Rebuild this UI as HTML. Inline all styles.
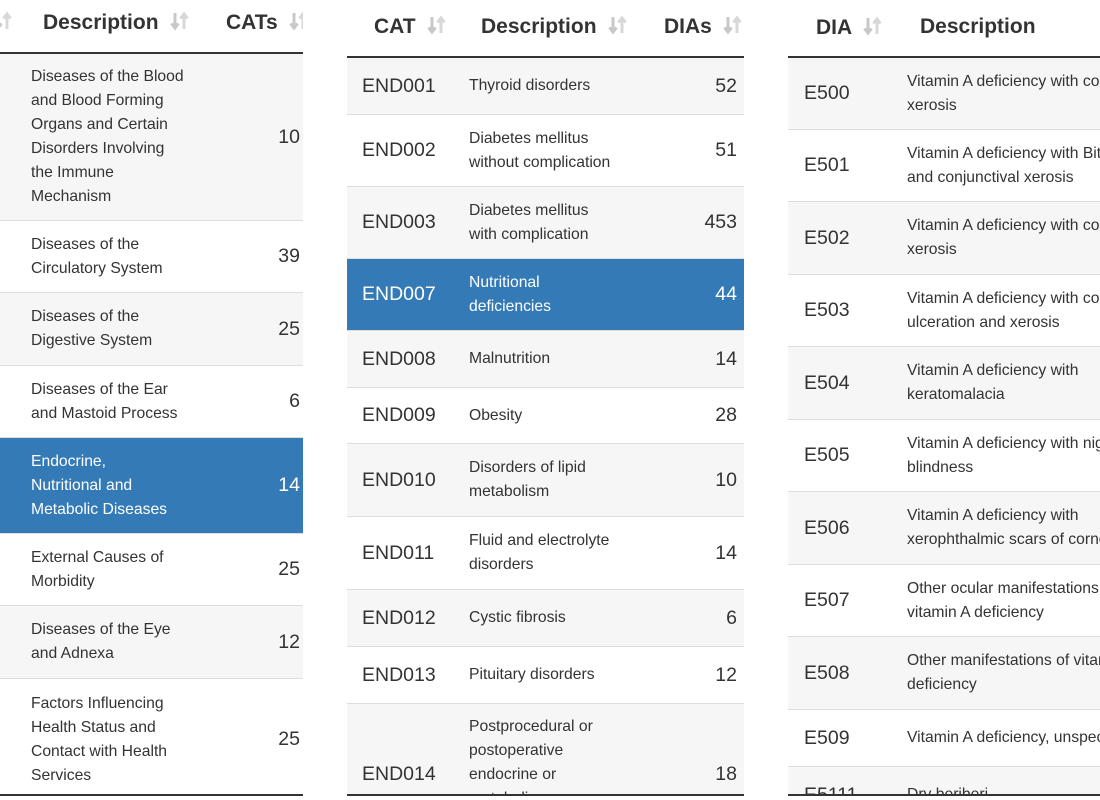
<!DOCTYPE html>
<html><head><meta charset="utf-8"><style>
*{margin:0;padding:0;box-sizing:border-box}
html,body{width:1100px;height:800px;overflow:hidden}
body{background:#fff;font-family:"Liberation Sans",sans-serif;color:#333;position:relative}
.p{position:absolute;top:0;height:796px;overflow:hidden;border-bottom:2px solid #333}
.hd{position:absolute;left:0;right:0;top:0;border-bottom:2px solid #333}
.h{position:absolute;font-weight:bold;font-size:21px;color:#333;white-space:nowrap}
.s{display:inline-block;margin-left:10px;width:22px;height:22px;vertical-align:-3px}
.r{position:absolute;left:0;right:0;border-bottom:1px solid #ddd;display:flex;align-items:center}
.g{background:#f6f6f6}
.b{background:#337ab7;color:#fff}
.d{position:absolute;font-size:15.7px;line-height:24px;white-space:nowrap}
.c{position:absolute;font-size:19.5px}
.n{position:absolute;font-size:19.5px;text-align:right}
</style></head><body>
<svg width="0" height="0" style="position:absolute"><defs><symbol id="si" viewBox="0 0 22 22"><path d="M6 3v14M2.5 13.5L6 18l3.5-4.5" stroke="#c8c8c8" stroke-width="3" fill="none"/><path d="M15 19V5M11.5 8.5L15 4l3.5 4.5" stroke="#d8d8d8" stroke-width="3" fill="none"/></symbol></defs></svg>

<div class="p" style="left:0;width:303px">
<div class="hd" style="height:54px"></div>
<div class="h" style="left:-8px;top:10px;width:20px"><svg class="s" style="margin:0"><use href="#si"/></svg></div>
<div class="h" style="left:43px;top:10px">Description<svg class="s"><use href="#si"/></svg></div>
<div class="h" style="left:226px;top:10px">CATs<svg class="s"><use href="#si"/></svg></div>
<div class="r g" style="top:54px;height:167px"><div class="d" style="left:31px">Diseases of the Blood<br>and Blood Forming<br>Organs and Certain<br>Disorders Involving<br>the Immune<br>Mechanism</div><div class="n" style="right:3px">10</div></div>
<div class="r" style="top:221px;height:72px"><div class="d" style="left:31px">Diseases of the<br>Circulatory System</div><div class="n" style="right:3px">39</div></div>
<div class="r g" style="top:293px;height:73px"><div class="d" style="left:31px">Diseases of the<br>Digestive System</div><div class="n" style="right:3px">25</div></div>
<div class="r" style="top:366px;height:72px"><div class="d" style="left:31px">Diseases of the Ear<br>and Mastoid Process</div><div class="n" style="right:3px">6</div></div>
<div class="r b" style="top:438px;height:96px"><div class="d" style="left:31px">Endocrine,<br>Nutritional and<br>Metabolic Diseases</div><div class="n" style="right:3px">14</div></div>
<div class="r" style="top:534px;height:72px"><div class="d" style="left:31px">External Causes of<br>Morbidity</div><div class="n" style="right:3px">25</div></div>
<div class="r g" style="top:606px;height:73px"><div class="d" style="left:31px">Diseases of the Eye<br>and Adnexa</div><div class="n" style="right:3px">12</div></div>
<div class="r" style="top:679px;height:122px"><div class="d" style="left:31px">Factors Influencing<br>Health Status and<br>Contact with Health<br>Services</div><div class="n" style="right:3px">25</div></div>
</div>

<div class="p" style="left:347px;width:397px">
<div class="hd" style="height:58px"></div>
<div class="h" style="left:27px;top:14px">CAT<svg class="s"><use href="#si"/></svg></div>
<div class="h" style="left:134px;top:14px">Description<svg class="s"><use href="#si"/></svg></div>
<div class="h" style="left:317px;top:14px">DIAs<svg class="s"><use href="#si"/></svg></div>
<div class="r g" style="top:58px;height:57px"><div class="c" style="left:15px">END001</div><div class="d" style="left:122px">Thyroid disorders</div><div class="n" style="right:7px">52</div></div>
<div class="r" style="top:115px;height:72px"><div class="c" style="left:15px">END002</div><div class="d" style="left:122px">Diabetes mellitus<br>without complication</div><div class="n" style="right:7px">51</div></div>
<div class="r g" style="top:187px;height:72px"><div class="c" style="left:15px">END003</div><div class="d" style="left:122px">Diabetes mellitus<br>with complication</div><div class="n" style="right:7px">453</div></div>
<div class="r b" style="top:259px;height:72px"><div class="c" style="left:15px">END007</div><div class="d" style="left:122px">Nutritional<br>deficiencies</div><div class="n" style="right:7px">44</div></div>
<div class="r g" style="top:331px;height:57px"><div class="c" style="left:15px">END008</div><div class="d" style="left:122px">Malnutrition</div><div class="n" style="right:7px">14</div></div>
<div class="r" style="top:388px;height:56px"><div class="c" style="left:15px">END009</div><div class="d" style="left:122px">Obesity</div><div class="n" style="right:7px">28</div></div>
<div class="r g" style="top:444px;height:73px"><div class="c" style="left:15px">END010</div><div class="d" style="left:122px">Disorders of lipid<br>metabolism</div><div class="n" style="right:7px">10</div></div>
<div class="r" style="top:517px;height:73px"><div class="c" style="left:15px">END011</div><div class="d" style="left:122px">Fluid and electrolyte<br>disorders</div><div class="n" style="right:7px">14</div></div>
<div class="r g" style="top:590px;height:57px"><div class="c" style="left:15px">END012</div><div class="d" style="left:122px">Cystic fibrosis</div><div class="n" style="right:7px">6</div></div>
<div class="r" style="top:647px;height:57px"><div class="c" style="left:15px">END013</div><div class="d" style="left:122px">Pituitary disorders</div><div class="n" style="right:7px">12</div></div>
<div class="r g" style="top:704px;height:142px"><div class="c" style="left:15px">END014</div><div class="d" style="left:122px">Postprocedural or<br>postoperative<br>endocrine or<br>metabolic<br>complications</div><div class="n" style="right:7px">18</div></div>
</div>

<div class="p" style="left:788px;width:312px">
<div class="hd" style="height:58px"></div>
<div class="h" style="left:28px;top:15px">DIA<svg class="s"><use href="#si"/></svg></div>
<div class="h" style="left:132px;top:15px">Description</div>
<div class="r g" style="top:58px;height:72px"><div class="c" style="left:16px">E500</div><div class="d" style="left:119px">Vitamin A deficiency with conjunctival<br>xerosis</div></div>
<div class="r" style="top:130px;height:72px"><div class="c" style="left:16px">E501</div><div class="d" style="left:119px">Vitamin A deficiency with Bitot's spot<br>and conjunctival xerosis</div></div>
<div class="r g" style="top:202px;height:73px"><div class="c" style="left:16px">E502</div><div class="d" style="left:119px">Vitamin A deficiency with corneal<br>xerosis</div></div>
<div class="r" style="top:275px;height:72px"><div class="c" style="left:16px">E503</div><div class="d" style="left:119px">Vitamin A deficiency with corneal<br>ulceration and xerosis</div></div>
<div class="r g" style="top:347px;height:73px"><div class="c" style="left:16px">E504</div><div class="d" style="left:119px">Vitamin A deficiency with<br>keratomalacia</div></div>
<div class="r" style="top:420px;height:72px"><div class="c" style="left:16px">E505</div><div class="d" style="left:119px">Vitamin A deficiency with night<br>blindness</div></div>
<div class="r g" style="top:492px;height:73px"><div class="c" style="left:16px">E506</div><div class="d" style="left:119px">Vitamin A deficiency with<br>xerophthalmic scars of cornea</div></div>
<div class="r" style="top:565px;height:72px"><div class="c" style="left:16px">E507</div><div class="d" style="left:119px">Other ocular manifestations of<br>vitamin A deficiency</div></div>
<div class="r g" style="top:637px;height:73px"><div class="c" style="left:16px">E508</div><div class="d" style="left:119px">Other manifestations of vitamin A<br>deficiency</div></div>
<div class="r" style="top:710px;height:57px"><div class="c" style="left:16px">E509</div><div class="d" style="left:119px">Vitamin A deficiency, unspecified</div></div>
<div class="r g" style="top:767px;height:57px"><div class="c" style="left:16px">E5111</div><div class="d" style="left:119px">Dry beriberi</div></div>
</div>
</body></html>
